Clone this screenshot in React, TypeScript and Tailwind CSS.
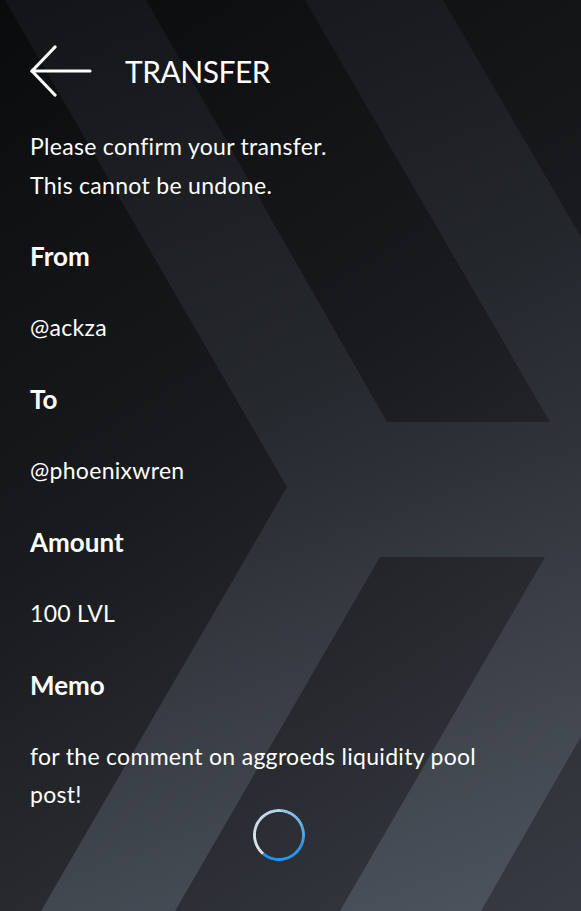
import { useMemo } from "react";

const font = { fontFamily: "Lato, 'Noto Sans', sans-serif" };

function Backdrop() {
  return (
    <svg
      className="absolute inset-0 w-full h-full"
      viewBox="0 0 581 911"
      preserveAspectRatio="none"
    >
      <defs>
        <linearGradient id="base" x1="0" y1="0" x2="581" y2="911" gradientUnits="userSpaceOnUse">
          <stop offset="0" stopColor="#0a0b0d" />
          <stop offset="0.45" stopColor="#181a1d" />
          <stop offset="1" stopColor="#383b43" />
        </linearGradient>
        <linearGradient id="band" x1="0" y1="0" x2="0" y2="911" gradientUnits="userSpaceOnUse">
          <stop offset="0" stopColor="#b5c7df" stopOpacity="0.05" />
          <stop offset="0.5" stopColor="#b5c7df" stopOpacity="0.09" />
          <stop offset="1" stopColor="#b5c7df" stopOpacity="0.18" />
        </linearGradient>
      </defs>
      <rect width="581" height="911" fill="url(#base)" />
      <path
        fillRule="evenodd"
        fill="url(#band)"
        d="M5 0 L443 0 L725 485 L481 911 L41 911 L287 487 Z M146 0 L305 0 L550 422 L387 422 Z M380 557 L545 557 L340 911 L175 911 Z"
      />
    </svg>
  );
}

function BackArrow() {
  return (
    <svg width="62" height="52" viewBox="0 0 62 52" fill="none" stroke="white" strokeWidth="3.2" strokeLinecap="round" strokeLinejoin="round">
      <path d="M2 26 H60" />
      <path d="M25 2 L2 26 L25 50" />
    </svg>
  );
}

function lerp(a: number[], b: number[], t: number) {
  return a.map((v, i) => Math.round(v + (b[i] - v) * t));
}

function Spinner() {
  // white -> light blue -> blue, clockwise from about 7 o'clock
  const segs = useMemo(() => {
    const stops: [number, number[]][] = [
      [0, [232, 236, 240]],
      [0.3, [205, 225, 242]],
      [0.45, [150, 200, 240]],
      [0.7, [45, 155, 240]],
      [1, [33, 150, 243]],
    ];
    const out: { d: string; c: string }[] = [];
    const n = 72;
    const r = 24.5;
    const cx = 26;
    const cy = 26;
    for (let i = 0; i < n; i++) {
      const t = i / n;
      let j = 0;
      while (j < stops.length - 2 && t > stops[j + 1][0]) j++;
      const [t0, c0] = stops[j];
      const [t1, c1] = stops[j + 1];
      const c = lerp(c0, c1, (t - t0) / (t1 - t0));
      const a0 = ((220 + i * 5) * Math.PI) / 180;
      const a1 = ((220 + i * 5 + 5.5) * Math.PI) / 180;
      const x0 = cx + r * Math.sin(a0);
      const y0 = cy - r * Math.cos(a0);
      const x1 = cx + r * Math.sin(a1);
      const y1 = cy - r * Math.cos(a1);
      out.push({ d: `M${x0} ${y0} A${r} ${r} 0 0 1 ${x1} ${y1}`, c: `rgb(${c.join(",")})` });
    }
    return out;
  }, []);

  return (
    <svg width="52" height="52" viewBox="0 0 52 52" fill="none">
      {segs.map((s, i) => (
        <path key={i} d={s.d} stroke={s.c} strokeWidth="2.8" />
      ))}
    </svg>
  );
}

function Field({ label, value }: { label: string; value: string }) {
  return (
    <div className="flex flex-col">
      <div className="text-[26px] font-bold leading-[36px]">{label}</div>
      <div className="mt-[34px] text-[23px] leading-[39px] tracking-[0.3px]">{value}</div>
    </div>
  );
}

export default function App() {
  return (
    <div className="relative w-full min-h-[911px] overflow-hidden text-white" style={font}>
      <Backdrop />
      <div className="relative flex flex-col px-[30px]">
        <div className="mt-[45px] flex h-[52px] items-center gap-[33px]">
          <BackArrow />
          <h1 className="text-[30px] font-normal leading-none tracking-[-0.5px]">TRANSFER</h1>
        </div>

        <p className="mt-[30px] text-[23px] leading-[39px] tracking-[0.3px]">
          Please confirm your transfer.
          <br />
          This cannot be undone.
        </p>

        <div className="mt-[33px] flex flex-col gap-[34px]">
          <Field label="From" value="@ackza" />
          <Field label="To" value="@phoenixwren" />
          <Field label="Amount" value="100 LVL" />
          <div className="flex flex-col">
            <div className="text-[26px] font-bold leading-[36px]">Memo</div>
            <div className="mt-[34px] max-w-[470px] text-[23px] leading-[38px] tracking-[0.3px]">
              for the comment on aggroeds liquidity pool post!
            </div>
          </div>
        </div>

        <div className="flex justify-center pr-[23px] -mt-[4px]">
          <Spinner />
        </div>
      </div>
    </div>
  );
}
